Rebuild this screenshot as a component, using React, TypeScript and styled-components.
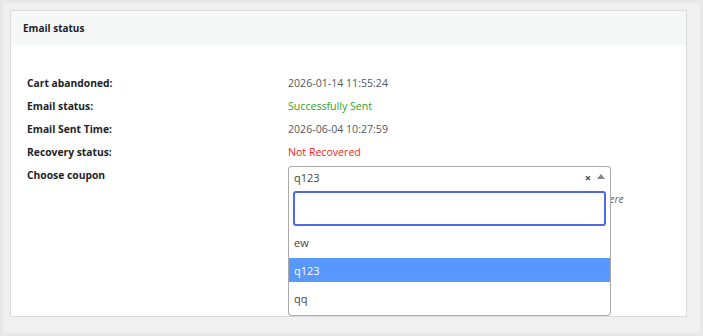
import React from "react";
import styled, { createGlobalStyle } from "styled-components";

const GlobalStyle = createGlobalStyle`
  html, body {
    margin: 0;
    padding: 0;
    background: #e8e8e9;
  }
  body {
    font-family: "Open Sans", "Noto Sans", "Liberation Sans", sans-serif;
    font-size: 10px;
    color: #3c434a;
  }
  * {
    box-sizing: border-box;
  }
`;

const Page = styled.div`
  margin: 3px;
  height: 330px;
  background: #f0f0f1;
  padding: 7px 13px 0 7px;
`;

const Panel = styled.div`
  height: 307px;
  background: #ffffff;
  border: 1px solid #dcdcde;
  display: flex;
  flex-direction: column;
`;

const Header = styled.div`
  height: 34px;
  flex-shrink: 0;
  display: flex;
  align-items: center;
  padding: 0 12px;
  background: #f6f7f7;
  font-size: 10px;
  font-weight: 700;
  color: #1d2327;
`;

const Body = styled.div`
  padding: 26px 16px 0 16px;
`;

const Rows = styled.div`
  display: grid;
  grid-template-columns: 261px 323px;
  grid-auto-rows: 23px;
  align-items: center;
`;

const Label = styled.div`
  font-size: 10.3px;
  font-weight: 700;
  color: #1d2327;
`;

const Value = styled.div<{ $tone?: "ok" | "bad" }>`
  font-size: 10.6px;
  color: ${(p) =>
    p.$tone === "ok" ? "#2ea52e" : p.$tone === "bad" ? "#ff1a1a" : "#50575e"};
`;

const CouponCell = styled.div`
  position: relative;
  align-self: start;
  margin-top: 3px;
`;

const SelectBox = styled.div`
  height: 23px;
  border: 1px solid #aaaaaa;
  border-bottom-color: #dddddd;
  border-radius: 4px 4px 0 0;
  display: flex;
  align-items: center;
  padding: 0 5px 0 5px;
  color: #444444;
  background: #ffffff;
  font-size: 11px;
`;

const Chosen = styled.span`
  flex: 1;
`;

const Clear = styled.span`
  font-weight: 700;
  font-size: 11px;
  color: #444;
  margin-right: 6px;
`;

const Arrow = styled.span`
  width: 0;
  height: 0;
  border-left: 4px solid transparent;
  border-right: 4px solid transparent;
  border-bottom: 5px solid #888888;
  margin-bottom: 3px;
`;

const Description = styled.p`
  margin: 3px 0 0;
  font-size: 10.3px;
  font-style: italic;
  color: #646970;
  white-space: nowrap;
`;

const Dropdown = styled.div`
  position: absolute;
  top: 22px;
  left: 0;
  width: 323px;
  height: 128px;
  background: #ffffff;
  border: 1px solid #aaaaaa;
  border-top: none;
  border-radius: 0 0 4px 4px;
  padding: 3px 0 0;
  z-index: 2;
`;

const SearchWrap = styled.div`
  padding: 0 4px;
`;

const Search = styled.input`
  display: block;
  width: 100%;
  height: 35px;
  margin: 0;
  border: 2px solid #5068e4;
  border-radius: 3px;
  outline: none;
  font: inherit;
`;

const Options = styled.ul`
  list-style: none;
  margin: 0;
  padding: 4px 0 0;
  display: flex;
  flex-direction: column;
  gap: 4px;
`;

const Option = styled.li<{ $active?: boolean }>`
  height: 24px;
  display: flex;
  align-items: center;
  padding: 0 5px;
  font-size: 11px;
  color: ${(p) => (p.$active ? "#ffffff" : "#444444")};
  background: ${(p) => (p.$active ? "#5897fb" : "transparent")};
`;

const rows = [
  { label: "Cart abandoned:", value: "2026-01-14 11:55:24" },
  { label: "Email status:", value: "Successfully Sent", tone: "ok" as const },
  { label: "Email Sent Time:", value: "2026-06-04 10:27:59" },
  { label: "Recovery status:", value: "Not Recovered", tone: "bad" as const },
];

const coupons = ["ew", "q123", "qq"];

export default function App() {
  return (
    <>
      <GlobalStyle />
      <Page>
        <Panel>
          <Header>Email status</Header>
          <Body>
            <Rows>
              {rows.map((r) => (
                <React.Fragment key={r.label}>
                  <Label>{r.label}</Label>
                  <Value $tone={r.tone}>{r.value}</Value>
                </React.Fragment>
              ))}
              <Label>Choose coupon</Label>
              <CouponCell>
                <SelectBox>
                  <Chosen>q123</Chosen>
                  <Clear>×</Clear>
                  <Arrow />
                </SelectBox>
                <Description>
                  Select the coupon code which will be included into the recovery email here
                </Description>
                <Dropdown>
                  <SearchWrap>
                    <Search type="text" />
                  </SearchWrap>
                  <Options>
                    {coupons.map((c) => (
                      <Option key={c} $active={c === "q123"}>
                        {c}
                      </Option>
                    ))}
                  </Options>
                </Dropdown>
              </CouponCell>
            </Rows>
          </Body>
        </Panel>
      </Page>
    </>
  );
}
